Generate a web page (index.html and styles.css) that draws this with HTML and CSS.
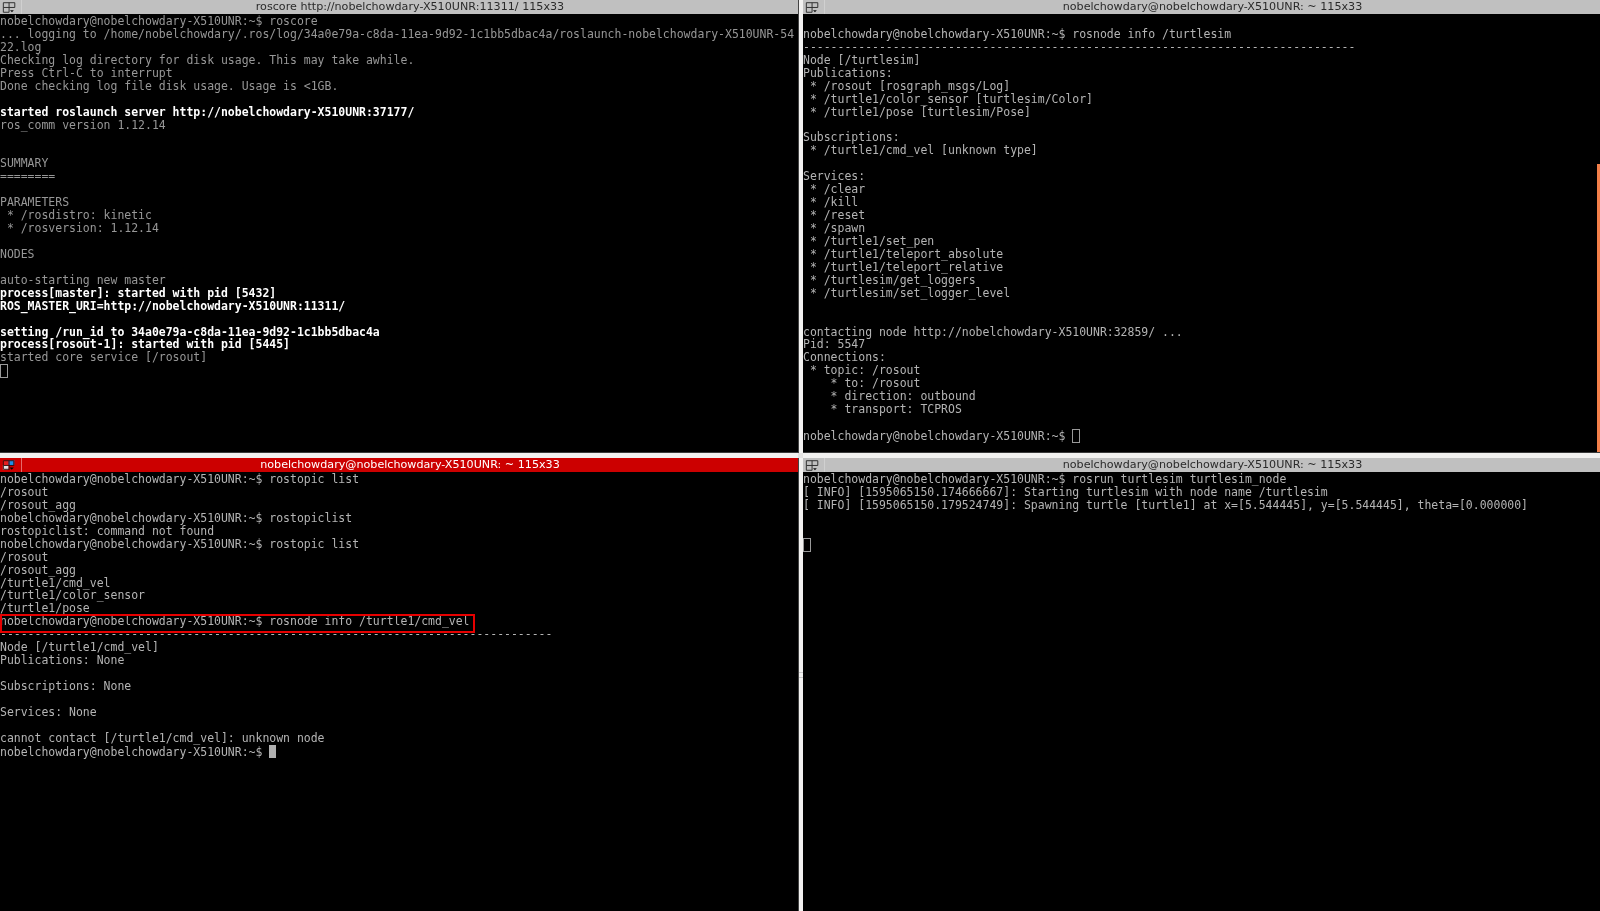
FILE: index.html
```html
<!DOCTYPE html>
<html lang="en">
<head>
<meta charset="utf-8">
<title>Terminator</title>
<link rel="stylesheet" href="styles.css">
</head>
<body>
<svg class="defs" width="0" height="0" aria-hidden="true">
  <symbol id="grid" viewBox="0 0 22 14">
    <path d="M3.500 2.500H15.500V7.500H3.500ZM9.500 2.500V12.500M3.500 7.500V12.500H9.500" fill="none" stroke="#2c2c2c" stroke-width="1"/>
    <path d="M10.500 10.500h4l-2 2z" fill="#111"/>
  </symbol>
  <symbol id="grid-active" viewBox="0 0 22 14">
    <rect x="3" y="2" width="6" height="5" fill="#e82020"/>
    <rect x="9" y="2" width="6" height="5" fill="#1e8fe8"/>
    <rect x="3" y="7" width="6" height="5" fill="#e4e4e4"/>
    <path d="M3.500 2.500H14.500V7.500H3.500ZM9.500 2.500V12M3.500 7.500V11.500H9.500" fill="none" stroke="#3a0a0a" stroke-width="1"/>
    <path d="M10 9.500h4.500l-2.200 2.500z" fill="#000"/>
  </symbol>
</svg>
<main class="desktop">
  <section class="pane pane-upper">
    <header class="title"><span class="menu"><svg class="icon"><use href="#grid"/></svg></span><span class="label">roscore http://nobelchowdary-X510UNR:11311/ 115x33</span></header>
    <pre class="term dim">nobelchowdary@nobelchowdary-X510UNR:~$ roscore
... logging to /home/nobelchowdary/.ros/log/34a0e79a-c8da-11ea-9d92-1c1bb5dbac4a/roslaunch-nobelchowdary-X510UNR-54
22.log
Checking log directory for disk usage. This may take awhile.
Press Ctrl-C to interrupt
Done checking log file disk usage. Usage is &lt;1GB.

<b>started roslaunch server http://nobelchowdary-X510UNR:37177/</b>
ros_comm version 1.12.14


SUMMARY
========

PARAMETERS
 * /rosdistro: kinetic
 * /rosversion: 1.12.14

NODES

auto-starting new master
<b>process[master]: started with pid [5432]</b>
<b>ROS_MASTER_URI=http://nobelchowdary-X510UNR:11311/</b>

<b>setting /run_id to 34a0e79a-c8da-11ea-9d92-1c1bb5dbac4a</b>
<b>process[rosout-1]: started with pid [5445]</b>
started core service [/rosout]
<span class="cursor"></span></pre>
  </section>
  <div class="vsep"></div>
  <section class="pane pane-upper">
    <header class="title"><span class="menu"><svg class="icon"><use href="#grid"/></svg></span><span class="label">nobelchowdary@nobelchowdary-X510UNR: ~ 115x33</span></header>
    <pre class="term">

nobelchowdary@nobelchowdary-X510UNR:~$ rosnode info /turtlesim
--------------------------------------------------------------------------------
Node [/turtlesim]
Publications:
 * /rosout [rosgraph_msgs/Log]
 * /turtle1/color_sensor [turtlesim/Color]
 * /turtle1/pose [turtlesim/Pose]

Subscriptions:
 * /turtle1/cmd_vel [unknown type]

Services:
 * /clear
 * /kill
 * /reset
 * /spawn
 * /turtle1/set_pen
 * /turtle1/teleport_absolute
 * /turtle1/teleport_relative
 * /turtlesim/get_loggers
 * /turtlesim/set_logger_level


contacting node http://nobelchowdary-X510UNR:32859/ ...
Pid: 5547
Connections:
 * topic: /rosout
    * to: /rosout
    * direction: outbound
    * transport: TCPROS

nobelchowdary@nobelchowdary-X510UNR:~$ <span class="cursor"></span></pre>
    <div class="scrollbar"></div>
  </section>
  <div class="hsep"></div>
  <div class="hsep hsep-mid"></div>
  <div class="hsep"></div>
  <section class="pane">
    <header class="title title-active"><span class="menu menu-active"><svg class="icon"><use href="#grid-active"/></svg></span><span class="label">nobelchowdary@nobelchowdary-X510UNR: ~ 115x33</span></header>
    <pre class="term">nobelchowdary@nobelchowdary-X510UNR:~$ rostopic list
/rosout
/rosout_agg
nobelchowdary@nobelchowdary-X510UNR:~$ rostopiclist
rostopiclist: command not found
nobelchowdary@nobelchowdary-X510UNR:~$ rostopic list
/rosout
/rosout_agg
/turtle1/cmd_vel
/turtle1/color_sensor
/turtle1/pose
<span class="highlight">nobelchowdary@nobelchowdary-X510UNR:~$ rosnode info /turtle1/cmd_vel</span>
--------------------------------------------------------------------------------
Node [/turtle1/cmd_vel]
Publications: None

Subscriptions: None

Services: None

cannot contact [/turtle1/cmd_vel]: unknown node
nobelchowdary@nobelchowdary-X510UNR:~$ <span class="cursor cursor-solid"></span></pre>
  </section>
  <div class="vsep"><span class="grip"></span></div>
  <section class="pane">
    <header class="title"><span class="menu"><svg class="icon"><use href="#grid"/></svg></span><span class="label">nobelchowdary@nobelchowdary-X510UNR: ~ 115x33</span></header>
    <pre class="term">nobelchowdary@nobelchowdary-X510UNR:~$ rosrun turtlesim turtlesim_node
[ INFO] [1595065150.174666667]: Starting turtlesim with node name /turtlesim
[ INFO] [1595065150.179524749]: Spawning turtle [turtle1] at x=[5.544445], y=[5.544445], theta=[0.000000]


<span class="cursor"></span></pre>
  </section>
</main>
</body>
</html>
```
FILE: styles.css
```css
html, body {
  margin: 0;
  padding: 0;
  background: #000;
}
.defs {
  position: absolute;
}
.desktop {
  display: grid;
  grid-template-columns: 798px 5px 797px;
  grid-template-rows: 453px 5px 453px;
  width: 1600px;
  height: 911px;
  overflow: hidden;
  background: #f2f1f0;
}
.pane {
  position: relative;
  display: flex;
  flex-direction: column;
  background: #000;
  overflow: hidden;
}
.pane-upper {
  box-sizing: border-box;
  border-bottom: 1px solid #3a3a3a;
}
.title {
  display: flex;
  flex: 0 0 14px;
  height: 14px;
  background: #c0c0c0;
  color: #2a2a2a;
  font: 11.150px/14px "DejaVu Sans", sans-serif;
}
.title-active {
  background: #cc0000;
  color: #fff;
}
.menu {
  display: flex;
  flex: 0 0 22px;
  box-sizing: border-box;
  width: 22px;
  height: 14px;
  border-right: 1px solid #d0d0d0;
}
.menu-active {
  border-right: 1px solid #e66a6a;
}
.icon {
  width: 22px;
  height: 14px;
}
.label {
  flex: 1;
  text-align: center;
  white-space: nowrap;
  filter: blur(.3px);
}
.term {
  flex: 1;
  margin: 0;
  padding-top: 1px;
  color: #b4b4b4;
  font: 11.470px/12.940px "DejaVu Sans Mono", "Liberation Mono", monospace;
  white-space: pre;
  filter: blur(.3px);
}
.dim {
  color: #979797;
}
.term b {
  color: #fff;
  font-weight: 700;
}
.cursor {
  display: inline-block;
  box-sizing: border-box;
  width: 8px;
  height: 14px;
  border: 1px solid #999;
  vertical-align: -3px;
}
.cursor-solid {
  width: 7px;
  height: 13px;
  background: #b0b0b0;
  border: 0;
  vertical-align: -2px;
}
.highlight {
  position: relative;
  display: inline-block;
  height: 13px;
}
.highlight::after {
  content: "";
  position: absolute;
  left: 0;
  top: -1px;
  box-sizing: border-box;
  width: 475px;
  height: 19px;
  border: 2px solid #e60000;
}
.scrollbar {
  position: absolute;
  top: 164px;
  right: 0;
  bottom: 0;
  width: 3px;
  background: #f37f4a;
}
.vsep {
  display: flex;
  align-items: center;
  background: #f2f1f0;
  border-left: 1px solid #444;
}
.hsep {
  background: #f2f1f0;
}
.hsep-mid {
  background: #e4e3e2;
}
.grip {
  display: block;
  width: 100%;
  height: 4px;
  margin-top: -20px;
  border-top: 1px solid #c8c8c8;
  border-bottom: 1px solid #c8c8c8;
}
```
